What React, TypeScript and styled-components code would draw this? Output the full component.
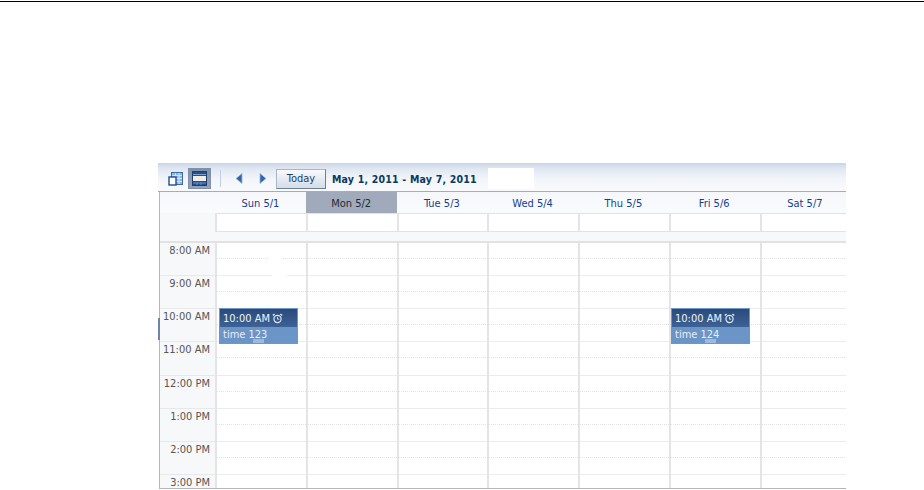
import styled, { createGlobalStyle } from "styled-components";

const Global = createGlobalStyle`
  html, body {
    margin: 0;
    padding: 0;
    background: #ffffff;
  }
  body {
    font-family: "DejaVu Sans Condensed", "DejaVu Sans", sans-serif;
  }
`;

const Page = styled.div`
  width: 924px;
  height: 490px;
  overflow: hidden;
  box-sizing: border-box;
  padding: 1px 0 0;
  background: #fff;
`;

const TopRule = styled.div`
  height: 1px;
  background: #000;
  margin-bottom: 161px;
`;

const Calendar = styled.div`
  position: relative;
  width: 688px;
  height: 326px;
  margin-left: 158px;
  overflow: hidden;
`;

const Toolbar = styled.div`
  height: 29px;
  box-sizing: border-box;
  display: flex;
  align-items: center;
  padding: 3px 0 0 6px;
  background: linear-gradient(#c9d5e6 0, #dfe6f1 5px, #f2f5fa 16px, #f9fafc 100%);
  border-bottom: 1px solid #a9abae;
`;

const ViewButton = styled.div<{ $active?: boolean }>`
  width: 23px;
  height: 21px;
  margin-right: 1px;
  display: flex;
  align-items: center;
  justify-content: center;
  box-sizing: border-box;
  background: ${(p) => (p.$active ? "linear-gradient(#7f92ab, #93a3b8)" : "transparent")};
  border: 1px solid ${(p) => (p.$active ? "#7f90a8" : "transparent")};
`;

const Divider = styled.div`
  width: 1px;
  height: 17px;
  margin: 0 12px 0 8px;
  background: #c2cfdf;
`;

const NavButton = styled.div`
  width: 12px;
  height: 14px;
  margin-right: 12px;
  display: flex;
  align-items: center;
  justify-content: center;
`;

const TodayButton = styled.div`
  width: 50px;
  height: 20px;
  margin-left: -5px;
  box-sizing: border-box;
  display: flex;
  align-items: center;
  justify-content: center;
  font-size: 11px;
  color: #1f3f66;
  background: linear-gradient(#f8fafc, #d3dce8);
  border: 1px solid #aab6c6;
  border-right-color: #6f7f94;
  border-bottom-color: #6f7f94;
`;

const RangeTitle = styled.div`
  margin-left: 6px;
  font-size: 10.5px;
  font-weight: 700;
  letter-spacing: 0.2px;
  color: #0a3a5e;
  white-space: nowrap;
`;

const Blank = styled.div`
  position: absolute;
  left: 330px;
  top: 5px;
  width: 46px;
  height: 21px;
  background: #fff;
`;

const LeftTab = styled.div`
  position: absolute;
  left: 0;
  top: 155px;
  width: 2px;
  height: 22px;
  background: #6d86a8;
`;

const Board = styled.div`
  margin-left: 1px;
  border-left: 1px solid #b4b6b8;
  border-bottom: 1px solid #b4b6b8;
  height: 297px;
  box-sizing: border-box;
  overflow: hidden;
`;

const HeadRow = styled.div`
  display: grid;
  grid-template-columns: 55px repeat(7, 90.75px);
  height: 21px;
  background: linear-gradient(#f6f7fa, #fafbfd);
`;

const DayHead = styled.div<{ $today?: boolean }>`
  display: flex;
  align-items: center;
  justify-content: center;
  padding-top: 1px;
  font-size: 11px;
  color: ${(p) => (p.$today ? "#1d2a3a" : "#123f8f")};
  background: ${(p) => (p.$today ? "#a0aabb" : "transparent")};
`;

const AllDayRow = styled.div`
  display: grid;
  grid-template-columns: 55px repeat(7, 90.75px);
  height: 28px;
  background: #f7f8fa;
  border-bottom: 2px solid #e2e2e2;
`;

const AllDayCell = styled.div`
  height: 19px;
  box-sizing: border-box;
  background: #fff;
  border-top: 1px solid #e2e2e2;
  border-bottom: 1px solid #e2e2e2;
  border-left: 2px solid #e4e4e4;
`;

const Hours = styled.div`
  position: relative;
  display: grid;
  grid-template-columns: 55px repeat(7, 90.75px);
`;

const Gutter = styled.div`
  background: #f7f8fa;
`;

const HourLabel = styled.div`
  height: 33.14px;
  box-sizing: border-box;
  padding: 1px 5px 0 0;
  text-align: right;
  font-size: 11px;
  line-height: 13px;
  color: #555;
  border-bottom: 1px solid #e8e8e8;
`;

const DayColumn = styled.div`
  border-left: 2px solid #e4e4e4;
  background: #fff;
`;

const HourCell = styled.div`
  height: 33.14px;
  box-sizing: border-box;
  border-bottom: 1px solid #ececec;
  background-image: repeating-linear-gradient(to right, #e2e2e2 0 1px, #fff 1px 2px);
  background-position: left 15px;
  background-size: 100% 1px;
  background-repeat: no-repeat;
`;

// white retouch marks that sit over the Sunday grid lines
const DotGap = styled.div`
  position: absolute;
  left: 109px;
  top: 14px;
  width: 13px;
  height: 3px;
  background: #fff;
`;

const LineGap = styled.div`
  position: absolute;
  left: 112px;
  top: 31px;
  width: 15px;
  height: 3px;
  background: #fff;
`;

const EventCard = styled.div<{ $left: number }>`
  position: absolute;
  left: ${(p) => p.$left}px;
  top: 65px;
  width: 79px;
  height: 36px;
  box-sizing: border-box;
  border: 1px solid #6e97c8;
  background: #6a95c6;
  color: #fff;
  font-size: 11px;
`;

const EventHead = styled.div`
  height: 18px;
  box-sizing: border-box;
  display: flex;
  align-items: center;
  gap: 2px;
  padding: 1px 0 0 3px;
  color: #eef3fa;
  background: linear-gradient(#2a4a7a, #3d6296);
`;

const EventBody = styled.div`
  position: relative;
  z-index: 1;
  height: 16px;
  line-height: 16px;
  padding-left: 3px;
  color: #e6eef8;
`;

const Patch = styled.div`
  position: absolute;
  left: 33px;
  bottom: 0;
  width: 11px;
  height: 4px;
  background: #9db9db;
`;

function MonthIcon() {
  return (
    <svg width="16" height="14" viewBox="0 0 16 14">
      <rect x="3.5" y="0.5" width="11" height="12" fill="#8fb3e4" stroke="#3b6aa8" />
      <path d="M4 3.5h10M4 6.5h10M4 9.5h10M7.5 1v11M11 1v11" stroke="#d5e3f6" />
      <rect x="1" y="5" width="7" height="8" fill="#fff" stroke="#1e4f8f" strokeWidth="1.4" />
    </svg>
  );
}

function WeekIcon() {
  return (
    <svg width="15" height="15" viewBox="0 0 15 15">
      <rect x="0.5" y="0.5" width="14" height="14" fill="#24508f" stroke="#1e3f70" />
      <path d="M1 3.5h13" stroke="#7f9fcc" />
      <rect x="1" y="5" width="13" height="5" fill="#f0efe6" />
      <path d="M1 12h13M5 11v3M9 11v3" stroke="#5f8fd0" />
    </svg>
  );
}

function Arrow({ left }: { left?: boolean }) {
  return (
    <svg width="8" height="11" viewBox="0 0 8 11">
      <path
        d={left ? "M7 0.5v10L1 5.5z" : "M1 0.5v10L7 5.5z"}
        fill="#2c68ad"
        stroke="#9fb4cc"
        strokeWidth="0.8"
      />
    </svg>
  );
}

function AlarmIcon() {
  return (
    <svg width="11" height="11" viewBox="0 0 11 11" fill="none" stroke="#dfe9f6">
      <circle cx="5.5" cy="6" r="3.6" strokeWidth="1.2" />
      <path d="M5.5 4v2.2h1.8" strokeWidth="0.9" />
      <path d="M0.8 2.6 2.6 1M10.2 2.6 8.4 1" strokeWidth="1.4" />
    </svg>
  );
}

const days = ["Sun 5/1", "Mon 5/2", "Tue 5/3", "Wed 5/4", "Thu 5/5", "Fri 5/6", "Sat 5/7"];
const hours = ["8:00 AM", "9:00 AM", "10:00 AM", "11:00 AM", "12:00 PM", "1:00 PM", "2:00 PM", "3:00 PM"];

function CalendarEvent({ left, title }: { left: number; title: string }) {
  return (
    <EventCard $left={left}>
      <EventHead>
        10:00 AM
        <AlarmIcon />
      </EventHead>
      <EventBody>{title}</EventBody>
      <Patch />
    </EventCard>
  );
}

export default function App() {
  return (
    <>
      <Global />
      <Page>
        <TopRule />
        <Calendar>
          <Toolbar>
            <ViewButton>
              <MonthIcon />
            </ViewButton>
            <ViewButton $active>
              <WeekIcon />
            </ViewButton>
            <Divider />
            <NavButton>
              <Arrow left />
            </NavButton>
            <NavButton>
              <Arrow />
            </NavButton>
            <TodayButton>Today</TodayButton>
            <RangeTitle>May 1, 2011 - May 7, 2011</RangeTitle>
          </Toolbar>
          <Blank />
          <LeftTab />
          <Board>
            <HeadRow>
              <div />
              {days.map((d, i) => (
                <DayHead key={d} $today={i === 1}>
                  {d}
                </DayHead>
              ))}
            </HeadRow>
            <AllDayRow>
              <div />
              {days.map((d) => (
                <AllDayCell key={d} />
              ))}
            </AllDayRow>
            <Hours>
              <Gutter>
                {hours.map((h) => (
                  <HourLabel key={h}>{h}</HourLabel>
                ))}
              </Gutter>
              {days.map((d) => (
                <DayColumn key={d}>
                  {hours.map((h) => (
                    <HourCell key={h} />
                  ))}
                </DayColumn>
              ))}
              <DotGap />
              <LineGap />
              <CalendarEvent left={59} title="time 123" />
              <CalendarEvent left={511} title="time 124" />
            </Hours>
          </Board>
        </Calendar>
      </Page>
    </>
  );
}
